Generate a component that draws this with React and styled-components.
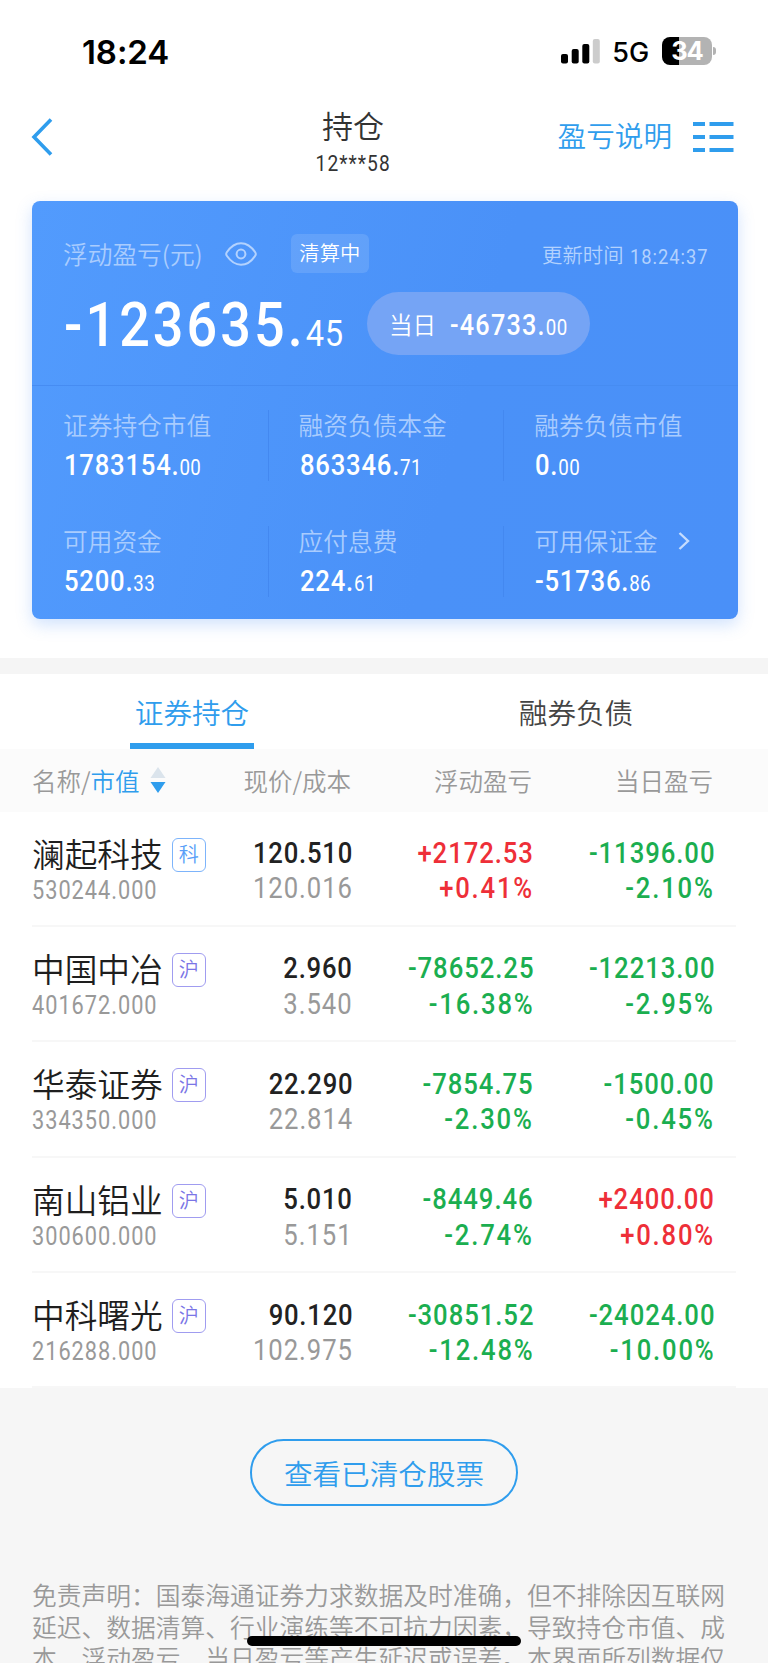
import React from 'react'
import styled, { createGlobalStyle } from 'styled-components'

const GlobalStyle = createGlobalStyle`
    * {
        box-sizing: border-box;
    }
    html, body {
        margin: 0;
        overflow: hidden;
    }
    body {
        background: #fff;
        color: #222;
        font-family: Roboto, 'Noto Sans CJK SC', sans-serif;
    }
`

//styled components
const Page = styled.div`
    position: relative;
    width: 768px;
    height: 1663px;
    overflow: hidden;
    display: flex;
    flex-direction: column;
    background: #fff;
`

const StatusBar = styled.div`
    height: 102px;
    flex-shrink: 0;
    padding: 0 52px 0 82px;
    display: flex;
    align-items: center;
    justify-content: space-between;
    font-family: Inter, sans-serif;
    color: #000;
`

const Clock = styled.div`
    padding-top: 1px;
    font-size: 33px;
    font-weight: 600;
    letter-spacing: -.1px;
`

const StatusIcons = styled.div`
    display: flex;
    align-items: center;
`

const Network = styled.span`
    margin: 2px 13px 0 12px;
    font-size: 27px;
    font-weight: 450;
    letter-spacing: -.1px;
`

const Battery = styled.div`
    width: 50px;
    height: 28px;
    border-radius: 8px;
    background: linear-gradient(90deg, #000 34%, #b3b3b3 34%);
    color: #fff;
    font-size: 25.5px;
    font-weight: 700;
    line-height: 28px;
    text-align: center;
    letter-spacing: -1.2px;
`

const BatteryTip = styled.div`
    width: 3px;
    height: 8px;
    margin-left: 1px;
    border-radius: 0 4px 4px 0;
    background: #b3b3b3;
`

const NavBar = styled.div`
    height: 99px;
    flex-shrink: 0;
    padding: 0 34px 0 31px;
    display: grid;
    grid-template-columns: 200px 1fr 200px;
`

const Back = styled.svg`
    margin-top: 16px;
`

const NavTitle = styled.div`
    padding-right: 59px;
    display: flex;
    flex-direction: column;
    align-items: center;
    color: #333;
`

const Title = styled.div`
    margin-top: 3px;
    font-size: 31px;
    line-height: 46px;
    font-weight: 350;
`

const NavActions = styled.div`
    height: 70px;
    display: flex;
    align-items: center;
    justify-content: flex-end;
    gap: 21px;
    color: #2f9ded;
    font-size: 28.6px;
    font-weight: 350;
    line-height: 1.2;
    white-space: nowrap;
`

const Num = styled.span`
    display: inline-block;
    font-family: Roboto, sans-serif;
    font-size: ${props => props.size}px;
    font-weight: ${props => props.weight || 500};
    letter-spacing: ${props => props.gap || '.03em'};
    line-height: 1.2;
    white-space: nowrap;
    color: ${props => props.color || 'inherit'};
    transform: scaleX(.87);
    transform-origin: ${props => props.origin || 'left'};
`

const Cents = styled.span`
    font-size: ${props => props.size}px;
    font-weight: 450;
    letter-spacing: .02em;
`

const Card = styled.div`
    width: 706px;
    height: 417.5px;
    margin-left: 32px;
    flex-shrink: 0;
    border-radius: 8px;
    background: linear-gradient(105deg, #529bfd 0%, #4a91f8 60%, #4a90f8 100%);
    box-shadow: 0 6px 16px rgba(74, 145, 248, .25);
    color: #fff;
`

const CardTop = styled.div`
    height: 185px;
    padding: 33px 28px 0 31px;
    border-bottom: 1px solid #468cf2;
`

const CardLine = styled.div`
    height: 39px;
    display: flex;
    align-items: center;
`

const Label = styled.div`
    font-size: 24.7px;
    line-height: 36px;
    margin-top: -2px;
    font-weight: 350;
    color: #a9ccfe;
    white-space: nowrap;
    font-family: 'Noto Sans CJK SC', sans-serif;
`

const Chip = styled.div`
    width: 78px;
    height: 39px;
    margin-left: 34px;
    border-radius: 6px;
    background: rgba(255, 255, 255, .12);
    font-size: 20.3px;
    font-weight: 350;
    line-height: 41px;
    text-align: center;
`

const Updated = styled.div`
    margin-left: auto;
    width: 168px;
    display: flex;
    align-items: center;
    gap: 6px;
    font-family: 'Noto Sans CJK SC', sans-serif;
    font-size: 20.4px;
    line-height: 30px;
    font-weight: 350;
    color: #b3d2fe;
    white-space: nowrap;
`

const UpdatedTime = styled.div`
    padding-top: 3px;
`

const Headline = styled.div`
    height: 63px;
    margin-top: 19px;
    display: flex;
    align-items: center;
`

const HeadlineValue = styled.div`
    width: 304px;
    padding: 4px 0 0 1px;
`

const Pill = styled.div`
    width: 223px;
    height: 63px;
    padding-left: 22px;
    border-radius: 32px;
    background: #75a4f5;
    display: flex;
    align-items: center;
    gap: 14px;
    font-size: 23.6px;
    font-weight: 350;
    white-space: nowrap;
`

const PillValue = styled.div`
    padding-top: 3px;
`

const Stats = styled.div`
    display: grid;
    grid-template-columns: repeat(3, 235.6px);
    row-gap: 45px;
    padding-top: 24px;
`

const Stat = styled.div`
    height: 71px;
    padding-left: 31px;
    border-left: 1px solid ${props => props.first ? 'transparent' : '#4388f0'};
`

const StatLabel = styled.div`
    height: 29px;
    margin: 0 0 9px -1px;
    display: flex;
    align-items: center;
    gap: 20px;
`

const Band = styled.div`
    height: 16px;
    margin-top: 39px;
    flex-shrink: 0;
    background: #f5f5f5;
`

const Tabs = styled.div`
    height: 75px;
    flex-shrink: 0;
    display: grid;
    grid-template-columns: 1fr 1fr;
    justify-items: center;
`

const Tab = styled.div`
    width: 124px;
    height: 75px;
    border-bottom: 6px solid ${props => props.active ? '#2f9ded' : 'transparent'};
    color: ${props => props.active ? '#2f9ded' : '#444'};
    font-size: 28.6px;
    font-weight: 350;
    line-height: 80px;
    text-align: center;
    white-space: nowrap;
`

const columns = `
    display: grid;
    grid-template-columns: 190px 130px 181px 181px;
    flex-shrink: 0;
`

const TableHead = styled.div`
    ${columns}
    height: 63px;
    padding-left: 32px;
    align-items: center;
    background: #fbfbfb;
    color: #999;
    font-family: 'Noto Sans CJK SC', sans-serif;
    font-size: 24.5px;
    font-weight: 350;
    white-space: nowrap;
`

const HeadCell = styled.div`
    padding-right: 1px;
    text-align: right;
`

const SortCell = styled.div`
    display: flex;
    align-items: center;
`

const SortName = styled.span`
    color: #2f9ded;
`

const Row = styled.div`
    ${columns}
    height: 115.4px;
    margin: 0 32px;
    padding-top: 23px;
    border-bottom: 2px solid #f7f7f7;
`

const Cell = styled.div`
    display: flex;
    flex-direction: column;
    align-items: ${props => props.left ? 'flex-start' : 'flex-end'};
    margin: ${props => props.left ? '0' : '1.5px -1px 0 0'};
`

const NameLine = styled.div`
    height: 41px;
    display: flex;
    align-items: center;
    gap: 9px;
`

const Name = styled.div`
    padding-top: 1px;
    font-size: 32.7px;
    line-height: 40px;
    font-weight: 350;
    color: #1e1e1e;
    white-space: nowrap;
`

const Tag = styled.div`
    width: 34px;
    height: 34px;
    margin-top: -1px;
    border: 1.5px solid ${props => props.tech ? '#7db4fb' : '#a09cf0'};
    border-radius: 6px;
    color: ${props => props.tech ? '#589ef8' : '#7b75e6'};
    font-size: 20px;
    font-weight: 350;
    line-height: 32px;
    text-align: center;
`

const Footer = styled.div`
    flex: 1;
    padding: 51px 32px 0;
    background: #f6f6f6;
    display: flex;
    flex-direction: column;
    align-items: center;
`

const ClearedButton = styled.button`
    width: 268px;
    height: 67px;
    flex-shrink: 0;
    border: 2px solid #2f9ded;
    border-radius: 34px;
    background: transparent;
    color: #2f9ded;
    font-family: 'Noto Sans CJK SC', sans-serif;
    font-size: 28.6px;
    font-weight: 350;
    line-height: 62px;
    padding: 0;
`

const Disclaimer = styled.div`
    width: 704px;
    margin-top: 73px;
    color: #999;
    font-family: 'Noto Sans CJK SC', sans-serif;
    font-size: 24.75px;
    font-weight: 350;
    line-height: 31.2px;
    white-space: nowrap;
`

const HomeIndicator = styled.div`
    position: absolute;
    left: 247px;
    bottom: 17px;
    width: 274px;
    height: 10px;
    border-radius: 5px;
    background: #000;
`

const stats = [
    { label: '证券持仓市值', value: '1783154', cents: '00' },
    { label: '融资负债本金', value: '863346', cents: '71' },
    { label: '融券负债市值', value: '0', cents: '00' },
    { label: '可用资金', value: '5200', cents: '33' },
    { label: '应付息费', value: '224', cents: '61' },
    { label: '可用保证金', value: '-51736', cents: '86', more: true },
]

const holdings = [
    { name: '澜起科技', tag: '科', worth: '530244.000', price: '120.510', cost: '120.016', float: ['+2172.53', '+0.41%'], day: ['-11396.00', '-2.10%'] },
    { name: '中国中冶', tag: '沪', worth: '401672.000', price: '2.960', cost: '3.540', float: ['-78652.25', '-16.38%'], day: ['-12213.00', '-2.95%'] },
    { name: '华泰证券', tag: '沪', worth: '334350.000', price: '22.290', cost: '22.814', float: ['-7854.75', '-2.30%'], day: ['-1500.00', '-0.45%'] },
    { name: '南山铝业', tag: '沪', worth: '300600.000', price: '5.010', cost: '5.151', float: ['-8449.46', '-2.74%'], day: ['+2400.00', '+0.80%'] },
    { name: '中科曙光', tag: '沪', worth: '216288.000', price: '90.120', cost: '102.975', float: ['-30851.52', '-12.48%'], day: ['-24024.00', '-10.00%'] },
]

const disclaimer = [
    '免责声明：国泰海通证券力求数据及时准确，但不排除因互联网',
    '延迟、数据清算、行业演练等不可抗力因素，导致持仓市值、成',
    '本、浮动盈亏、当日盈亏等产生延迟或误差。本界面所列数据仅',
]

const Signal = () =>
    <svg width="39" height="25" viewBox="0 0 39 25">
        <rect x="0" y="15" width="7" height="9.5" rx="2" />
        <rect x="10.7" y="10" width="7" height="14.5" rx="2" />
        <rect x="21.3" y="5" width="7" height="19.5" rx="2" />
        <rect x="31.8" y="0" width="7" height="24.5" rx="2" fill="#ccc" />
    </svg>

const MenuIcon = () =>
    <svg width="41" height="30" viewBox="0 0 41 30" fill="#2f9ded">
        <path d="M0 0h12v4H0zM16.5 0h24v4h-24zM0 13h12v4H0zM16.5 13h24v4h-24zM0 26h12v4H0zM16.5 26h24v4h-24z" />
    </svg>

const Eye = styled.svg`
    margin-left: 22px;
`

const EyeIcon = () =>
    <Eye width="32" height="24" viewBox="0 0 32 24" fill="none" stroke="#b3d2fe" strokeWidth="2">
        <path d="M1.8 10.2C5.5 4.8 10 1.2 16 1.2S26.500 4.800 30.200 10.200Q31.400 12 30.200 13.800C26.500 19.200 22 22.800 16 22.800S5.500 19.200 1.800 13.800Q.6 12 1.800 10.200Z" />
        <circle cx="16" cy="12" r="4.4" />
    </Eye>

const Sort = styled.svg`
    margin-left: 10px;
`

const SortIcon = () =>
    <Sort width="16" height="26" viewBox="0 0 16 26">
        <path d="M8 0l7.5 11H.5z" fill="#dbe4ec" />
        <path d="M8 26l7.5-11H.5z" fill="#2f9ded" />
    </Sort>

const Change = ({ values }) => {
    const color = values[0][0] === '+' ? '#ee2f38' : '#1bae50'
    return (
        <Cell>
            {values.map(v =>
                <Num key={v} size={29.5} gap={v.endsWith('%') ? '.07em' : '.037em'} color={color} origin="right">{v}</Num>
            )}
        </Cell>
    )
}

const Holding = ({ item }) =>
    <Row>
        <Cell left>
            <NameLine>
                <Name>{item.name}</Name>
                <Tag tech={item.tag === '科' ? 1 : 0}>{item.tag}</Tag>
            </NameLine>
            <Num size={25} gap=".045em" weight={400} color="#999">{item.worth}</Num>
        </Cell>
        <Cell>
            <Num size={29.5} origin="right">{item.price}</Num>
            <Num size={29.5} gap=".037em" weight={450} color="#999" origin="right">{item.cost}</Num>
        </Cell>
        <Change values={item.float} />
        <Change values={item.day} />
    </Row>

const App = () =>
    <Page>
        <GlobalStyle />
        <StatusBar>
            <Clock>18:24</Clock>
            <StatusIcons>
                <Signal />
                <Network>5G</Network>
                <Battery>34</Battery>
                <BatteryTip />
            </StatusIcons>
        </StatusBar>
        <NavBar>
            <Back width="23" height="38" viewBox="0 0 23 38" fill="none" stroke="#2f9ded" strokeWidth="3.6">
                <path d="M20 1.5L3 19l17 17.5" />
            </Back>
            <NavTitle>
                <Title>持仓</Title>
                <Num size={22} gap=".055em" weight={450} origin="center">12***58</Num>
            </NavTitle>
            <NavActions>盈亏说明<MenuIcon /></NavActions>
        </NavBar>
        <Card>
            <CardTop>
                <CardLine>
                    <Label>浮动盈亏(元)</Label>
                    <EyeIcon />
                    <Chip>清算中</Chip>
                    <Updated>
                        更新时间
                        <UpdatedTime><Num size={21} gap=".055em" weight={450}>18:24:37</Num></UpdatedTime>
                    </Updated>
                </CardLine>
                <Headline>
                    <HeadlineValue>
                        <Num size={62} gap=".057em">-123635.<Cents size={37.5}>45</Cents></Num>
                    </HeadlineValue>
                    <Pill>
                        当日
                        <PillValue><Num size={29} gap=".048em">-46733.<Cents size={21.5}>00</Cents></Num></PillValue>
                    </Pill>
                </Headline>
            </CardTop>
            <Stats>
                {stats.map((s, i) =>
                    <Stat key={s.label} first={i % 3 === 0 ? 1 : 0}>
                        <StatLabel>
                            <Label>{s.label}</Label>
                            {s.more &&
                                <svg width="12" height="18" viewBox="0 0 12 18" fill="none" stroke="#c5dcfe" strokeWidth="2.4">
                                    <path d="M1.5 1l8.5 8-8.5 8" />
                                </svg>}
                        </StatLabel>
                        <Num size={29.5}>{s.value}.<Cents size={21.5}>{s.cents}</Cents></Num>
                    </Stat>
                )}
            </Stats>
        </Card>
        <Band />
        <Tabs>
            <Tab active={1}>证券持仓</Tab>
            <Tab>融券负债</Tab>
        </Tabs>
        <TableHead>
            <SortCell>名称/<SortName>市值</SortName><SortIcon /></SortCell>
            <HeadCell>现价/成本</HeadCell>
            <HeadCell>浮动盈亏</HeadCell>
            <HeadCell>当日盈亏</HeadCell>
        </TableHead>
        {holdings.map(item => <Holding key={item.name} item={item} />)}
        <Footer>
            <ClearedButton>查看已清仓股票</ClearedButton>
            <Disclaimer>
                {disclaimer.map(line => <div key={line}>{line}</div>)}
            </Disclaimer>
        </Footer>
        <HomeIndicator />
    </Page>


export default App
